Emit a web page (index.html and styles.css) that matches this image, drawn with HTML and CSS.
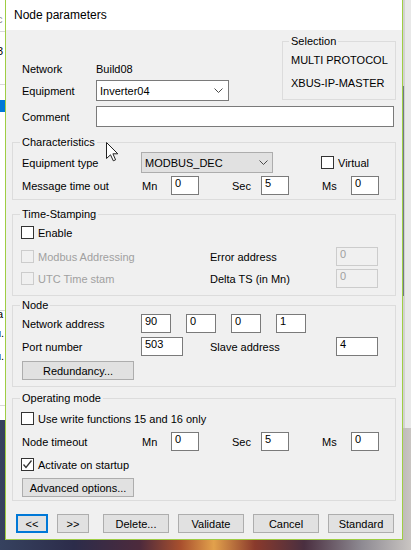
FILE: index.html
```html
<!DOCTYPE html>
<html lang="en">

<head>
    <meta charset="UTF-8">
    <meta name="viewport" content="width=device-width, initial-scale=1.0">
    <title>Node parameters</title>
    <link rel="stylesheet" href="styles.css">
</head>

<body>
    <!-- window behind the dialog -->
    <div class="backwin">
        <span class="frag f-c">c</span>
        <span class="frag f-3">3</span>
        <div class="hline l1"></div>
        <div class="hline l2"></div>
        <div class="selblock"></div>
        <div class="hline l3"></div>
        <span class="frag f-a">a</span>
        <span class="frag f-u1">u.</span>
        <span class="frag f-u2">u.</span>
        <div class="hline l4"></div>
    </div>
    <div class="rightpane">
        <div class="rbar"></div>
    </div>

    <div class="dialog">
        <div class="titlebar">Node parameters</div>

        <div class="dlg-body">
            <div class="top">
                <div class="ident">
                    <div class="row r-net">
                        <span class="lbl-short">Network</span>
                        <span>Build08</span>
                    </div>
                    <div class="row r-eq">
                        <span class="lbl-short">Equipment</span>
                        <div class="combo">
                            <span>Inverter04</span>
                            <svg class="chev" width="9" height="5" viewBox="0 0 9 5"><polyline points="0.5,0.5 4.5,4.5 8.5,0.5" /></svg>
                        </div>
                    </div>
                </div>
                <fieldset class="group selection">
                    <legend>Selection</legend>
                    <div class="sel-line">MULTI PROTOCOL</div>
                    <div class="sel-line second">XBUS-IP-MASTER</div>
                </fieldset>
            </div>

            <div class="row comment">
                <span class="lbl-short">Comment</span>
                <span class="field grow"></span>
            </div>

            <!-- Characteristics -->
            <fieldset class="group chars">
                <legend>Characteristics</legend>
                <div class="row r21 mt3">
                    <span class="lbl">Equipment type</span>
                    <div class="combo flat">
                        <span>MODBUS_DEC</span>
                        <svg class="chev" width="9" height="5" viewBox="0 0 9 5"><polyline points="0.5,0.5 4.5,4.5 8.5,0.5" /></svg>
                    </div>
                    <span class="chk virtual"></span>
                    <span class="chk-lbl">Virtual</span>
                </div>
                <div class="row mt3">
                    <span class="lbl-time">Message time out</span>
                    <span class="unit">Mn</span><span class="field f28">0</span>
                    <span class="unit">Sec</span><span class="field f28">5</span>
                    <span class="unit">Ms</span><span class="field f28">0</span>
                </div>
            </fieldset>

            <!-- Time-Stamping -->
            <fieldset class="group stamping">
                <legend>Time-Stamping</legend>
                <div class="row r17 mt3">
                    <span class="chk"></span>
                    <span class="chk-lbl">Enable</span>
                </div>
                <div class="row mt6">
                    <div class="ts-left">
                        <span class="chk off"></span>
                        <span class="chk-lbl off">Modbus Addressing</span>
                    </div>
                    <span class="lbl-mid">Error address</span>
                    <span class="field f42 off">0</span>
                </div>
                <div class="row mt3">
                    <div class="ts-left">
                        <span class="chk off"></span>
                        <span class="chk-lbl off">UTC Time stam</span>
                    </div>
                    <span class="lbl-mid">Delta TS (in Mn)</span>
                    <span class="field f42 off">0</span>
                </div>
            </fieldset>

            <!-- Node -->
            <fieldset class="group node">
                <legend>Node</legend>
                <div class="row mt2">
                    <span class="lbl">Network address</span>
                    <span class="field f30">90</span>
                    <span class="field f30 ip">0</span>
                    <span class="field f30 ip">0</span>
                    <span class="field f30 ip">1</span>
                </div>
                <div class="row mt4">
                    <span class="lbl">Port number</span>
                    <span class="field f42">503</span>
                    <span class="lbl-mid slave">Slave address</span>
                    <span class="field f42">4</span>
                </div>
                <div class="row mt5">
                    <button class="btn wide">Redundancy...</button>
                </div>
            </fieldset>

            <!-- Operating mode -->
            <fieldset class="group opmode">
                <legend>Operating mode</legend>
                <div class="row r17 mt5">
                    <span class="chk"></span>
                    <span class="chk-lbl">Use write functions 15 and 16 only</span>
                </div>
                <div class="row mt5">
                    <span class="lbl-time">Node timeout</span>
                    <span class="unit">Mn</span><span class="field f28">0</span>
                    <span class="unit">Sec</span><span class="field f28">5</span>
                    <span class="unit">Ms</span><span class="field f28">0</span>
                </div>
                <div class="row r17 mt5">
                    <span class="chk on">
                        <svg width="11" height="11" viewBox="0 0 11 11"><polyline points="1.5,5.5 4,8.5 9.5,1.5" /></svg>
                    </span>
                    <span class="chk-lbl">Activate on startup</span>
                </div>
                <div class="row mt5">
                    <button class="btn wide">Advanced options...</button>
                </div>
            </fieldset>

            <div class="actions">
                <button class="btn nav focus">&lt;&lt;</button>
                <button class="btn nav">&gt;&gt;</button>
                <button class="btn act first">Delete...</button>
                <button class="btn act">Validate</button>
                <button class="btn act">Cancel</button>
                <button class="btn act">Standard</button>
            </div>
        </div>
    </div>

    <!-- mouse pointer -->
    <svg class="cursor" width="13" height="20" viewBox="0 0 13 20">
        <path d="M0.5 0.5 V16.5 L4.5 12.8 L7.3 18.8 L9.6 17.8 L6.9 11.8 H11.8 Z" />
    </svg>
</body>

</html>
```

FILE: styles.css
```css
* {
    box-sizing: border-box;
}

body {
    margin: 0;
    width: 411px;
    height: 550px;
    overflow: hidden;
    position: relative;
    font-family: "Liberation Sans", Arial, sans-serif;
    font-size: 11px;
    color: #000;
    background: linear-gradient(90deg, #36425f 0%, #2c2c4a 18%, #4d2a3c 34%, #a9502e 44%, #e2a14c 52%, #8a3a2c 62%, #4a2f40 74%, #8e8a92 88%, #c9c5c2 100%);
}

/* ---- background window ---- */
.backwin {
    position: absolute;
    left: 0;
    top: 0;
    width: 411px;
    height: 420px;
    background: #fff;
}

.frag {
    position: absolute;
    left: -3px;
    line-height: 12px;
}

.f-c { top: 13px; color: #8a8a8a; }
.f-3 { top: 45px; }
.f-a { top: 308px; }
.f-u1 { top: 327px; left: -5px; }
.f-u2 { top: 350px; left: -5px; }

.hline {
    position: absolute;
    left: 0;
    width: 411px;
    height: 1px;
    background: #d9d9d9;
}

.l1 { top: 31px; }
.l2 { top: 84px; }
.l3 { top: 310px; }
.l4 { top: 405px; }

.selblock {
    position: absolute;
    left: 0;
    top: 100px;
    width: 8px;
    height: 12px;
    background: #0078d7;
}

.rightpane {
    position: absolute;
    left: 403px;
    top: 0;
    width: 8px;
    height: 428px;
    background: #e8e8e8;
    border-left: 2px solid #d2d2d2;
}

.rbar {
    position: absolute;
    left: -2px;
    top: 86px;
    width: 1px;
    height: 210px;
    background: #6f7a87;
}

/* ---- dialog ---- */
.dialog {
    position: absolute;
    left: 5px;
    top: -1px;
    width: 398px;
    height: 541px;
    border: 1px solid #9fcd43;
    background: #f0f0f0;
    display: flex;
    flex-direction: column;
}

.titlebar {
    flex: none;
    height: 30px;
    padding-left: 8px;
    display: flex;
    align-items: center;
    background: #fff;
    font-size: 12px;
}

.dlg-body {
    flex: 1;
}

.row {
    display: flex;
    align-items: center;
    height: 19px;
    white-space: nowrap;
}

.r17 { height: 17px; }
.r21 { height: 21px; }

.mt2 { margin-top: 2px; }
.mt3 { margin-top: 3px; }
.mt4 { margin-top: 4px; }
.mt5 { margin-top: 5px; }
.mt6 { margin-top: 6px; }

/* top area */
.top {
    display: flex;
    justify-content: space-between;
    align-items: flex-start;
}

.ident {
    padding: 32px 0 0 16px;
}

.r-net { height: 14px; }
.r-eq { height: 21px; margin-top: 4px; }

.lbl-short {
    width: 74px;
}

.comment {
    height: 21px;
    margin: 5px 8px 0 16px;
}

/* group boxes */
.group {
    margin: 0 6px;
    padding: 0 6px 0 9px;
    border: 1px solid #dcdcdc;
    min-width: 0;
}

.group legend {
    padding: 0 2px;
    margin-left: -2px;
    line-height: 13px;
}

.selection {
    width: 114px;
    margin: 5px 6px 0 0;
    padding: 6px 4px 9px 8px;
}

.sel-line {
    line-height: 13px;
}

.sel-line.second {
    margin-top: 10px;
}

.chars { margin-top: 9px; padding-bottom: 4px; }
.stamping { margin-top: 8px; padding-bottom: 7px; }
.node { margin-top: 3px; padding-bottom: 6px; }
.opmode { margin-top: 5px; padding-bottom: 3px; }

.lbl {
    width: 119px;
}

.lbl-time {
    width: 120px;
}

.unit {
    width: 29px;
}

.field + .unit {
    margin-left: 33px;
}

.lbl-mid {
    width: 126px;
}

.slave {
    margin-left: 27px;
}

.ts-left {
    display: flex;
    align-items: center;
    width: 188px;
}

/* controls */
.field {
    display: block;
    height: 19px;
    padding: 0 3px;
    line-height: 13px;
    border: 1px solid #7a7a7a;
    background: #fff;
}

.field.grow {
    flex: 1;
    height: 21px;
}

.f28 { width: 28px; }
.f30 { width: 30px; }
.f42 { width: 42px; }

.ip {
    margin-left: 15px;
}

.field.off {
    border-color: #cccccc;
    background: #f0f0f0;
    color: #a0a0a0;
}

.combo {
    display: flex;
    align-items: center;
    justify-content: space-between;
    width: 133px;
    height: 21px;
    padding-left: 3px;
    border: 1px solid #7a7a7a;
    background: #fff;
}

.combo.flat {
    width: 132px;
    border-color: #adadad;
    background: #e1e1e1;
}

.chev {
    margin-right: 5px;
    fill: none;
    stroke: #4a4a4a;
    stroke-width: 1;
}

.combo.flat .chev {
    margin-right: 4px;
}

.chk {
    display: block;
    flex: none;
    width: 13px;
    height: 13px;
    margin-left: -1px;
    border: 1px solid #333;
    background: #fff;
}

.chk svg {
    display: block;
    fill: none;
    stroke: #333;
    stroke-width: 1.3;
}

.chk.off {
    border-color: #cccccc;
    background: #f0f0f0;
}

.chk.virtual {
    margin-left: 48px;
}

.chk-lbl {
    margin-left: 4px;
}

.chk-lbl.off {
    color: #a0a0a0;
}

.btn {
    display: flex;
    align-items: center;
    justify-content: center;
    height: 19px;
    padding: 0;
    border: 1px solid #adadad;
    background: #e1e1e1;
    font-family: inherit;
    font-size: 11px;
    color: #000;
}

.btn.wide {
    width: 112px;
}

.actions {
    display: flex;
    margin-top: 13px;
    padding-left: 10px;
}

.btn.nav {
    width: 32px;
}

.btn.nav + .btn.nav {
    margin-left: 9px;
}

.btn.focus {
    border: 2px solid #0078d7;
}

.btn.act {
    width: 66px;
    margin-left: 9px;
}

.btn.act.first {
    margin-left: 14px;
}

.cursor {
    position: absolute;
    left: 106px;
    top: 142px;
    fill: #fff;
    stroke: #222;
    stroke-width: 1;
}
```
